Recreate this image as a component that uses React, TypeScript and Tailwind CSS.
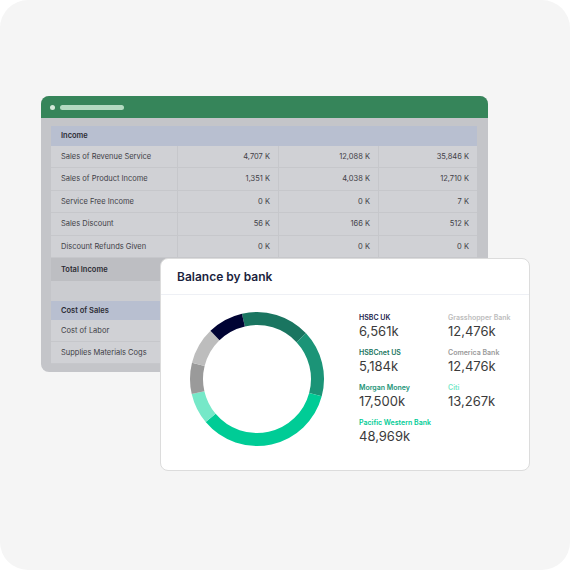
import React from 'react';

const font = { fontFamily: 'Inter, "Noto Sans", sans-serif' };

type Row = { label: string; values?: string[]; kind?: 'head' | 'row' | 'total' | 'blank'; h: string };

const rows: Row[] = [
  { label: 'Income', kind: 'head', h: 'h-[20px]' },
  { label: 'Sales of Revenue Service', values: ['4,707 K', '12,088 K', '35,846 K'], h: 'h-[22px]' },
  { label: 'Sales of Product Income', values: ['1,351 K', '4,038 K', '12,710 K'], h: 'h-[23px]' },
  { label: 'Service Free Income', values: ['0 K', '0 K', '7 K'], h: 'h-[22px]' },
  { label: 'Sales Discount', values: ['56 K', '166 K', '512 K'], h: 'h-[23px]' },
  { label: 'Discount Refunds Given', values: ['0 K', '0 K', '0 K'], h: 'h-[22px]' },
  { label: 'Total Income', kind: 'total', h: 'h-[23px]' },
  { label: '', kind: 'blank', h: 'h-[20px]' },
  { label: 'Cost of Sales', kind: 'head', h: 'h-[19px]' },
  { label: 'Cost of Labor', values: ['', '', ''], h: 'h-[22px]' },
  { label: 'Supplies Materials Cogs', values: ['', '', ''], h: 'h-[22px]' },
];

function Sheet() {
  return (
    <div className="w-[447px] h-[276px] rounded-[8px] overflow-hidden bg-[#c4c5c9] flex flex-col">
      <div className="h-[22px] bg-[#36855a] flex items-center pl-[9px] gap-[5px]">
        <div className="w-[5px] h-[5px] rounded-full bg-[#d3e9da]" />
        <div className="w-[64px] h-[5px] rounded-full bg-[#b3dac1]" />
      </div>
      <div className="pt-[8px] pl-[10px] pr-[11px]">
        {rows.map((r, i) => {
          if (r.kind === 'head') {
            return (
              <div key={i} className={`${r.h} bg-[#b8bfd0] flex items-center pl-[10px] text-[7.5px] font-semibold text-[#2b2b33]`}>
                {r.label}
              </div>
            );
          }
          if (r.kind === 'total') {
            return (
              <div key={i} className={`${r.h} bg-[#bdbec2] flex items-center pl-[10px] text-[7.5px] font-semibold text-[#2b2b33]`}>
                {r.label}
              </div>
            );
          }
          if (r.kind === 'blank') {
            return <div key={i} className={`${r.h} bg-[#cbccd0]`} />;
          }
          return (
            <div key={i} className={`${r.h} grid grid-cols-[127px_101px_100px_98px] bg-[#d0d1d5] border-b border-[#c6c7cb] text-[7.5px] text-[#404046]`}>
              <div className="flex items-center pl-[10px] border-r border-[#c6c7cb]">{r.label}</div>
              {r.values!.map((v, j) => (
                <div key={j} className={`flex items-center justify-end pr-[8px] ${j < 2 ? 'border-r border-[#c6c7cb]' : ''}`}>
                  {v}
                </div>
              ))}
            </div>
          );
        })}
      </div>
    </div>
  );
}

const segs = [
  { a0: -13, a1: 47, c: '#1a7560' },
  { a0: 47, a1: 105, c: '#1b9477' },
  { a0: 105, a1: 230, c: '#00cc96' },
  { a0: 230, a1: 257, c: '#76e8c8' },
  { a0: 257, a1: 284, c: '#9a9a9a' },
  { a0: 284, a1: 316, c: '#bdbdbd' },
  { a0: 316, a1: 347, c: '#000333' },
];

function arc(a0: number, a1: number, R: number, r: number, cx: number, cy: number) {
  const p = (a: number, rad: number) => {
    const t = (a * Math.PI) / 180;
    return `${(cx + rad * Math.sin(t)).toFixed(2)} ${(cy - rad * Math.cos(t)).toFixed(2)}`;
  };
  const large = a1 - a0 > 180 ? 1 : 0;
  return `M ${p(a0, R)} A ${R} ${R} 0 ${large} 1 ${p(a1, R)} L ${p(a1, r)} A ${r} ${r} 0 ${large} 0 ${p(a0, r)} Z`;
}

function Donut() {
  return (
    <svg width="136" height="136" viewBox="0 0 136 136">
      {segs.map((s, i) => (
        <path key={i} d={arc(s.a0, s.a1, 67, 54, 68, 68)} fill={s.c} />
      ))}
    </svg>
  );
}

const legend = [
  [
    { name: 'HSBC UK', value: '6,561k', c: 'text-[#1c1c4c]' },
    { name: 'HSBCnet US', value: '5,184k', c: 'text-[#1a7560]' },
    { name: 'Morgan Money', value: '17,500k', c: 'text-[#1b9477]' },
    { name: 'Pacific Western Bank', value: '48,969k', c: 'text-[#00cc96]' },
  ],
  [
    { name: 'Grasshopper Bank', value: '12,476k', c: 'text-[#bdbdbd]' },
    { name: 'Comerica Bank', value: '12,476k', c: 'text-[#9a9a9a]' },
    { name: 'Citi', value: '13,267k', c: 'text-[#76e8c8]' },
  ],
];

function Card() {
  return (
    <div className="absolute left-[160px] top-[258px] w-[370px] h-[213px] bg-white rounded-[8px] border border-[#dcdcdc] flex flex-col">
      <div className="h-[36px] flex items-center pl-[16px] border-b border-[#eef0f5]">
        <span className="text-[12px] font-semibold text-[#1b1f3e]">Balance by bank</span>
      </div>
      <div className="flex pl-[28px] pt-[16px]">
        <Donut />
        <div className="flex ml-[34px] pt-[2px]">
          {legend.map((col, ci) => (
            <div key={ci} className={`flex flex-col gap-[9px] ${ci === 0 ? 'w-[89px]' : ''}`}>
              {col.map((l) => (
                <div key={l.name} className="flex flex-col">
                  <span className={`text-[7px] font-semibold leading-[10px] ${l.c}`}>{l.name}</span>
                  <span className="text-[13px] leading-[16px] text-[#3b3b3b]">{l.value}</span>
                </div>
              ))}
            </div>
          ))}
        </div>
      </div>
    </div>
  );
}

export default function App() {
  return (
    <div className="w-[570px] h-[570px] bg-white" style={font}>
      <div className="relative w-full h-full rounded-[28px] bg-[#f5f5f5] pt-[96px] pl-[41px]">
        <Sheet />
        <Card />
      </div>
    </div>
  );
}
